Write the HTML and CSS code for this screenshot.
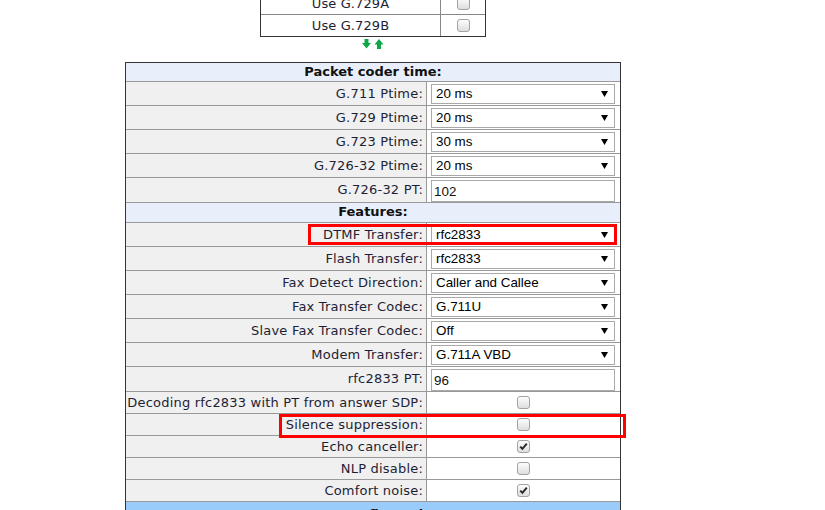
FILE: index.html
```html
<!DOCTYPE html>
<html>
<head>
<meta charset="utf-8">
<link rel="stylesheet" href="styles.css">
</head>
<body>
<div class="page">
  <table class="codecs">
    <tr><td class="name">Use G.729A</td><td class="chk"><span class="cb"></span></td></tr>
    <tr><td class="name">Use G.729B</td><td class="chk"><span class="cb"></span></td></tr>
  </table>
  <svg class="arrows" width="22" height="10" viewBox="0 0 22 10">
    <path d="M2.5 0 H6.5 V4 H9 L4.5 9.5 L0 4 H2.5 Z" fill="#0fa64b"/>
    <path d="M15 10 H19 V5.5 H21.5 L17 0 L12.5 5.5 H15 Z" fill="#0fa64b"/>
  </svg>
  <div class="main-wrap">
    <table class="main">
      <tr><th colspan="2" class="hdr">Packet coder time:</th></tr>
      <tr class="r-sel"><td class="lbl">G.711 Ptime:</td><td class="val"><div class="select"><span>20 ms</span><svg width="7" height="6" viewBox="0 0 7 6"><path d="M0 0 H7 L3.5 6 Z" fill="#000"/></svg></div></td></tr>
      <tr class="r-sel"><td class="lbl">G.729 Ptime:</td><td class="val"><div class="select"><span>20 ms</span><svg width="7" height="6" viewBox="0 0 7 6"><path d="M0 0 H7 L3.5 6 Z" fill="#000"/></svg></div></td></tr>
      <tr class="r-sel"><td class="lbl">G.723 Ptime:</td><td class="val"><div class="select"><span>30 ms</span><svg width="7" height="6" viewBox="0 0 7 6"><path d="M0 0 H7 L3.5 6 Z" fill="#000"/></svg></div></td></tr>
      <tr class="r-sel"><td class="lbl">G.726-32 Ptime:</td><td class="val"><div class="select"><span>20 ms</span><svg width="7" height="6" viewBox="0 0 7 6"><path d="M0 0 H7 L3.5 6 Z" fill="#000"/></svg></div></td></tr>
      <tr class="r-inp"><td class="lbl">G.726-32 PT:</td><td class="val"><input class="txt" type="text" value="102"></td></tr>
      <tr><th colspan="2" class="hdr hdr2">Features:</th></tr>
      <tr class="r-sel"><td class="lbl">DTMF Transfer:</td><td class="val"><div class="select"><span>rfc2833</span><svg width="7" height="6" viewBox="0 0 7 6"><path d="M0 0 H7 L3.5 6 Z" fill="#000"/></svg></div></td></tr>
      <tr class="r-sel"><td class="lbl">Flash Transfer:</td><td class="val"><div class="select"><span>rfc2833</span><svg width="7" height="6" viewBox="0 0 7 6"><path d="M0 0 H7 L3.5 6 Z" fill="#000"/></svg></div></td></tr>
      <tr class="r-sel"><td class="lbl">Fax Detect Direction:</td><td class="val"><div class="select"><span>Caller and Callee</span><svg width="7" height="6" viewBox="0 0 7 6"><path d="M0 0 H7 L3.5 6 Z" fill="#000"/></svg></div></td></tr>
      <tr class="r-sel"><td class="lbl">Fax Transfer Codec:</td><td class="val"><div class="select"><span>G.711U</span><svg width="7" height="6" viewBox="0 0 7 6"><path d="M0 0 H7 L3.5 6 Z" fill="#000"/></svg></div></td></tr>
      <tr class="r-sel"><td class="lbl">Slave Fax Transfer Codec:</td><td class="val"><div class="select"><span>Off</span><svg width="7" height="6" viewBox="0 0 7 6"><path d="M0 0 H7 L3.5 6 Z" fill="#000"/></svg></div></td></tr>
      <tr class="r-sel"><td class="lbl">Modem Transfer:</td><td class="val"><div class="select"><span>G.711A VBD</span><svg width="7" height="6" viewBox="0 0 7 6"><path d="M0 0 H7 L3.5 6 Z" fill="#000"/></svg></div></td></tr>
      <tr class="r-inp"><td class="lbl">rfc2833 PT:</td><td class="val"><input class="txt" type="text" value="96"></td></tr>
      <tr class="r-chk"><td class="lbl">Decoding rfc2833 with PT from answer SDP:</td><td class="val"><span class="cb"></span></td></tr>
      <tr class="r-chk"><td class="lbl">Silence suppression:</td><td class="val"><span class="cb"></span></td></tr>
      <tr class="r-chk"><td class="lbl">Echo canceller:</td><td class="val"><span class="cb"><svg width="11" height="11" viewBox="0 0 11 11"><path d="M2.2 5.6 L4.4 7.8 L8.8 2.6" fill="none" stroke="#2b2b2b" stroke-width="2"/></svg></span></td></tr>
      <tr class="r-chk"><td class="lbl">NLP disable:</td><td class="val"><span class="cb"></span></td></tr>
      <tr class="r-chk"><td class="lbl">Comfort noise:</td><td class="val"><span class="cb"><svg width="11" height="11" viewBox="0 0 11 11"><path d="M2.2 5.6 L4.4 7.8 L8.8 2.6" fill="none" stroke="#2b2b2b" stroke-width="2"/></svg></span></td></tr>
      <tr><th colspan="2" class="hdr hdr-blue">RTCP Configuration:</th></tr>
    </table>
    <div class="hl hl-dtmf"></div>
    <div class="hl hl-silence"></div>
  </div>
</div>
</body>
</html>
```
FILE: styles.css
```css
html, body {
  margin: 0;
  padding: 0;
  background: #fff;
}

.page {
  width: 746px;
  margin-top: -8px;
  display: flex;
  flex-direction: column;
  align-items: center;
  font-family: "DejaVu Sans", Verdana, sans-serif;
  font-size: 13px;
  color: #1e1e34;
}

/* top codec table */
.codecs {
  border-collapse: separate;
  border-spacing: 0;
  border: 1px solid #333;
  width: 226px;
}
.codecs td {
  border-bottom: 1px solid #888;
  height: 21px;
  padding: 0;
  line-height: 16px;
  vertical-align: middle;
}
.codecs tr:last-child td {
  border-bottom: none;
}
.codecs .name {
  width: 179px;
  text-align: center;
  border-right: 1px solid #888;
  letter-spacing: 0.1px;
}
.codecs .chk .cb {
  margin: 0 auto;
}

.arrows {
  display: block;
  margin: 2px 0 13px;
}

/* main table */
.main-wrap {
  position: relative;
  width: 496px;
}
.main {
  border-collapse: separate;
  border-spacing: 0;
  border: 1px solid #333;
  width: 496px;
}
.main td, .main th {
  padding: 0;
  border-bottom: 1px solid #999;
  line-height: 16px;
  vertical-align: middle;
}
.hdr {
  background: #e8effb;
  color: #111;
  font-weight: bold;
  text-align: center;
}
.main .hdr {
  padding: 1px 0;
}
.main .hdr2 {
  padding: 1px 0 2px;
}
.main .hdr-blue {
  background: #99ccfb;
  border-bottom: none;
  padding: 5px 0 4px;
}
.main .lbl {
  width: 297px;
  padding: 0 3px 0 0;
  background: #f0f0f0;
  border-right: 1px solid #999;
  text-align: right;
  white-space: nowrap;
  letter-spacing: 0.2px;
}
.main .val {
  background: #fff;
}
.r-sel .val {
  padding: 2px 0 1px 4px;
}
.r-inp .val {
  padding: 2px 0 0 4px;
}
.r-chk .val {
  height: 21px;
  text-align: center;
}
.r-chk .cb {
  margin: 0 auto;
}

.select {
  width: 184px;
  height: 20px;
  box-sizing: border-box;
  border: 1px solid #a9a9a9;
  background: #fff;
  display: flex;
  align-items: center;
  justify-content: space-between;
  padding: 0 6px 0 4px;
  font-family: "Liberation Sans", Arial, sans-serif;
  font-size: 13.4px;
  color: #000;
}
.select svg {
  display: block;
}

.txt {
  display: block;
  width: 184px;
  height: 22px;
  box-sizing: border-box;
  border: 1px solid #a9a9a9;
  margin: 0;
  padding: 0 2px;
  font-family: "Liberation Sans", Arial, sans-serif;
  font-size: 13.4px;
  color: #111;
  background: #fff;
  outline: none;
}

/* checkbox look */
.cb {
  display: block;
  width: 13px;
  height: 13px;
  box-sizing: border-box;
  border: 1px solid #a3a3a3;
  border-radius: 3px;
  background: linear-gradient(#fdfdfd, #dedede);
}
.cb svg {
  display: block;
}

/* red annotation boxes */
.hl {
  position: absolute;
  box-sizing: border-box;
  border: 3px solid #ff0000;
}
.hl-dtmf {
  left: 183px;
  top: 162px;
  width: 309px;
  height: 21px;
}
.hl-silence {
  left: 154px;
  top: 352px;
  width: 347px;
  height: 24px;
}
```
